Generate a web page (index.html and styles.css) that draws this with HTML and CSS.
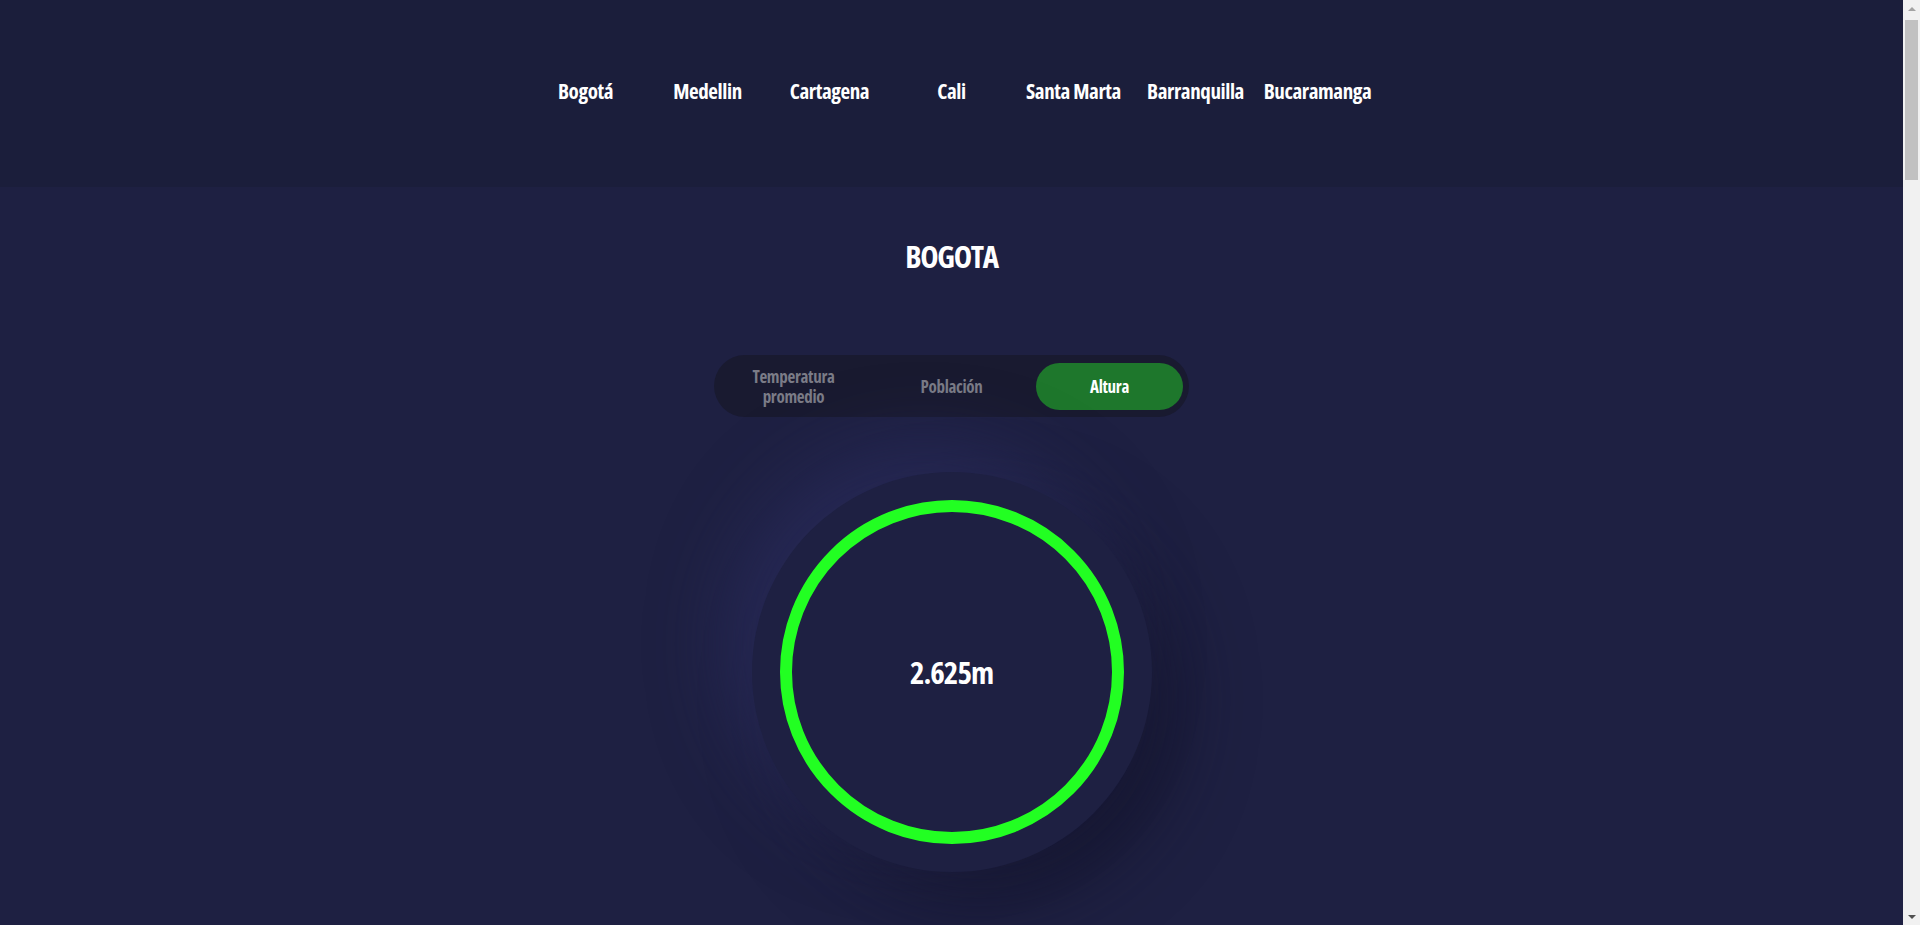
FILE: index.html
```html
<!DOCTYPE html>
<html lang="es">
<head>
<meta charset="utf-8">
<title>Ciudades de Colombia</title>
<link rel="stylesheet" href="styles.css">
</head>
<body>
<header class="topbar">
  <nav class="cities">
    <a class="city" href="#">Bogotá</a>
    <a class="city" href="#">Medellin</a>
    <a class="city" href="#">Cartagena</a>
    <a class="city" href="#">Cali</a>
    <a class="city" href="#">Santa Marta</a>
    <a class="city" href="#">Barranquilla</a>
    <a class="city" href="#">Bucaramanga</a>
  </nav>
</header>
<main class="content">
  <h1 class="city-title">BOGOTA</h1>
  <div class="toggle">
    <button class="toggle-btn">Temperatura<br>promedio</button>
    <button class="toggle-btn">Población</button>
    <button class="toggle-btn active">Altura</button>
  </div>
  <div class="dial">
    <div class="ring">
      <span class="value">2.625m</span>
    </div>
  </div>
  <div class="spacer"></div>
</main>
<div class="scrollbar" aria-hidden="true">
  <span class="scroll-arrow up"></span>
  <span class="scroll-thumb"></span>
  <span class="scroll-arrow down"></span>
</div>
</body>
</html>
```
FILE: styles.css
```css
html, body {
  margin: 0;
  padding: 0;
}
body {
  margin-right: 17px;
  background: #1e2042;
  font-family: "Open Sans", sans-serif;
  font-stretch: 75%;
  font-weight: 700;
  color: #ffffff;
}
.topbar {
  height: 187px;
  box-sizing: border-box;
  padding-bottom: 5px;
  background: #1b1e3b;
  display: flex;
  align-items: center;
  justify-content: center;
}
.cities {
  display: flex;
}
.city {
  width: 122px;
  text-align: center;
  white-space: nowrap;
  color: #ffffff;
  text-decoration: none;
  font-size: 21px;
  line-height: 24px;
  letter-spacing: -0.4px;
}
.content {
  display: flex;
  flex-direction: column;
  align-items: center;
}
.city-title {
  margin: 49px 0 0;
  font-size: 31px;
  line-height: 40px;
  font-weight: 700;
  letter-spacing: -1.3px;
}
.toggle {
  margin-top: 79px;
  width: 475px;
  box-sizing: border-box;
  height: 62px;
  padding: 8px 6px 7px;
  display: flex;
  gap: 11px;
  background: #191a30;
  border-radius: 31px;
}
.toggle-btn {
  flex: 1;
  border: 0;
  background: transparent;
  border-radius: 24px;
  font-family: inherit;
  font-stretch: 75%;
  font-weight: 700;
  font-size: 17px;
  line-height: 20px;
  letter-spacing: -0.3px;
  color: #7b7c87;
  padding: 0;
}
.toggle-btn.active {
  background: #1e772c;
  color: #ffffff;
}
.dial {
  margin-top: 55px;
  width: 400px;
  height: 400px;
  border-radius: 50%;
  background: #1e2042;
  box-shadow: -28px -28px 70px rgba(46, 48, 100, 0.55), 28px 28px 70px rgba(16, 17, 36, 0.6);
  display: flex;
  align-items: center;
  justify-content: center;
}
.ring {
  width: 344px;
  height: 344px;
  box-sizing: border-box;
  border: 12px solid #22ff22;
  border-radius: 50%;
  display: flex;
  align-items: center;
  justify-content: center;
}
.value {
  font-size: 31px;
  line-height: 40px;
  font-weight: 700;
  letter-spacing: -1px;
}
.spacer {
  height: 4278px;
}
.scrollbar {
  position: fixed;
  top: 0;
  right: 0;
  width: 17px;
  height: 100vh;
  background: #f1f1f1;
  display: flex;
  flex-direction: column;
  align-items: center;
}
.scroll-arrow {
  height: 17px;
  width: 17px;
  display: flex;
  align-items: center;
  justify-content: center;
}
.scroll-arrow::before {
  content: "";
  border-left: 4px solid transparent;
  border-right: 4px solid transparent;
}
.scroll-arrow.up::before {
  border-bottom: 4px solid #a3a3a3;
}
.scroll-arrow.down {
  margin-top: auto;
}
.scroll-arrow.down::before {
  border-top: 4px solid #505050;
}
.scroll-thumb {
  margin-top: 3px;
  width: 17px;
  box-sizing: border-box;
  border-left: 2px solid #f1f1f1;
  border-right: 2px solid #f1f1f1;
  height: 160px;
  background: #c1c1c1;
}
```
